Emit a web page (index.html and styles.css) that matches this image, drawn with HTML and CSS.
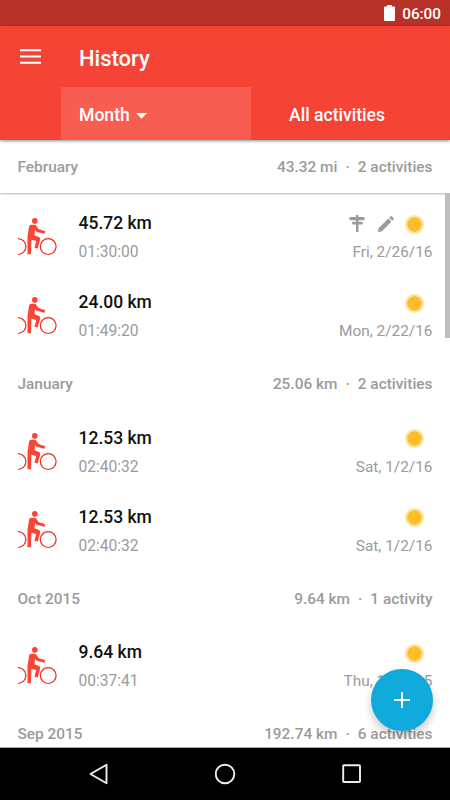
FILE: index.html
```
<!DOCTYPE html>
<html lang="en">
<head>
<meta charset="utf-8">
<title>History</title>
<link rel="stylesheet" href="styles.css">
</head>
<body>
<svg width="0" height="0" class="defs">
  <symbol id="rider" viewBox="0 0 40 40">
    <circle cx="30.2" cy="28.6" r="7.900" fill="none" stroke="#f22a1c" stroke-width="1.200"/>
    <path d="M0 20.700A7.900 7.900 0 0 1 0 36.500" fill="none" stroke="#f22a1c" stroke-width="1.200"/>
    <circle cx="16.8" cy="2.9" r="2.800" fill="#f94436"/>
    <path d="M13.200 6.800h3.300q1.300 0 2 1.200l2 3.100 6.800 2.200-.8 2.500-7.900-2.100-1.600-1.700-.5 5.300 4.500 1.600q1.600.7 1.200 2.400l-2.500 9.100-3.200-.7 1.700-6.600-4.800-1.400-.4 14.600H9.500V19l1.600-10.600q.4-1.600 2.100-1.600z" fill="#f94436"/>
  </symbol>
</svg>
<div class="screen">
  <div class="status">
    <svg class="battery" width="11" height="16" viewBox="0 0 11 16"><path d="M3 0h5v1.400h2q1 0 1 1v12.600q0 1-1 1H1q-1 0-1-1V2.400q0-1 1-1h2z" fill="#fff"/></svg>
    <span>06:00</span>
  </div>
  <header class="appbar">
    <div class="titlebar">
      <svg class="menu" width="21" height="15" viewBox="0 0 21 15"><path d="M0 1.300h21M0 7.500h21M0 13.700h21" stroke="#fff" stroke-width="2"/></svg>
      <h1>History</h1>
    </div>
    <div class="tabs">
      <div class="tab active">Month<svg class="caret" width="11" height="6" viewBox="0 0 11 6"><path d="M0 0h11L5.500 5.800z" fill="#fff"/></svg></div>
      <div class="tab">All activities</div>
    </div>
  </header>
  <main class="list">
    <div class="scrollbar"></div>
    <div class="group pinned"><span>February</span><span>43.32 mi<b>·</b>2 activities</span></div>
    <div class="row">
      <svg class="rider"><use href="#rider"/></svg>
      <div class="info"><strong>45.72 km</strong><span>01:30:00</span></div>
      <div class="meta">
        <div class="icons">
          <svg class="sign" width="17" height="18" viewBox="0 0 17 18"><path d="M7 0h2.500v2H15l1 1.600-1 1.600H9.500v1.500h3.400l1.300 1.300-1.300 1.400H9.500V17H7V9.400H3.200V6.700H7V5.200H1.300L0 3.600 1.300 2H7z" fill="#9b9b9b"/></svg>
          <svg class="pencil" width="16" height="16" viewBox="0 0 16 16"><path d="M0 16l.6-3.700L10.300 2.600l3.100 3.100L3.700 15.400zM11.200 1.700L12.400.5q.8-.8 1.600 0l1.500 1.500q.8.800 0 1.600l-1.200 1.200z" fill="#9b9b9b"/></svg>
          <i class="sun"></i>
        </div>
        <span>Fri, 2/26/16</span>
      </div>
    </div>
    <div class="row">
      <svg class="rider"><use href="#rider"/></svg>
      <div class="info"><strong>24.00 km</strong><span>01:49:20</span></div>
      <div class="meta"><div class="icons"><i class="sun"></i></div><span>Mon, 2/22/16</span></div>
    </div>
    <div class="group"><span>January</span><span>25.06 km<b>·</b>2 activities</span></div>
    <div class="row">
      <svg class="rider"><use href="#rider"/></svg>
      <div class="info"><strong>12.53 km</strong><span>02:40:32</span></div>
      <div class="meta"><div class="icons"><i class="sun"></i></div><span>Sat, 1/2/16</span></div>
    </div>
    <div class="row">
      <svg class="rider"><use href="#rider"/></svg>
      <div class="info"><strong>12.53 km</strong><span>02:40:32</span></div>
      <div class="meta"><div class="icons"><i class="sun"></i></div><span>Sat, 1/2/16</span></div>
    </div>
    <div class="group"><span>Oct 2015</span><span>9.64 km<b>·</b>1 activity</span></div>
    <div class="row">
      <svg class="rider"><use href="#rider"/></svg>
      <div class="info"><strong>9.64 km</strong><span>00:37:41</span></div>
      <div class="meta"><div class="icons"><i class="sun"></i></div><span>Thu, 10/1/15</span></div>
    </div>
    <div class="group"><span>Sep 2015</span><span>192.74 km<b>·</b>6 activities</span></div>
    <div class="fab"><svg width="16" height="16" viewBox="0 0 16 16"><path d="M8 0v16M0 8h16" stroke="#fff" stroke-width="2"/></svg></div>
  </main>
  <nav class="navbar">
    <svg width="20" height="22" viewBox="0 0 20 22"><path d="M17.500 1.800v18.400L1.500 11z" fill="none" stroke="#eee" stroke-width="1.900" stroke-linejoin="round"/></svg>
    <svg width="22" height="22" viewBox="0 0 22 22"><circle cx="10" cy="11" r="9.300" fill="none" stroke="#eee" stroke-width="1.900"/></svg>
    <svg width="20" height="22" viewBox="0 0 20 22"><rect x="1.200" y="2.200" width="16.800" height="16.800" rx=".7" fill="none" stroke="#eee" stroke-width="1.900"/></svg>
  </nav>
</div>
</body>
</html>
```
FILE: styles.css
```
* { box-sizing: border-box; }
body { margin: 0; font-family: Roboto, sans-serif; }
.defs { position: absolute; }
.screen { width: 450px; height: 800px; display: flex; flex-direction: column; overflow: hidden; background: #fff; }
svg { display: block; flex: none; }

.status { height: 26px; flex: none; background: #b73126; color: #fff; display: flex; align-items: center; justify-content: flex-end; gap: 7px; padding: 2px 9px 0 0; font-size: 15.3px; font-weight: 500; }
.battery { margin-top: -2px; }

.appbar { height: 114px; flex: none; background: #f54436; color: #fff; z-index: 2; box-shadow: 0 1px 3px rgba(0, 40, 40, .5); display: flex; flex-direction: column; }
.titlebar { height: 61px; display: flex; align-items: center; padding: 3px 0 0 20px; }
.menu { margin-top: -3px; }
h1 { margin: 0 0 0 38px; font-size: 22px; font-weight: 500; }
.tabs { height: 53px; display: flex; margin-left: 61px; }
.tab { width: 190px; display: flex; align-items: center; padding: 2px 0 0 18px; font-size: 17.6px; font-weight: 500; }
.tab + .tab { padding-left: 38px; }
.active { background: #f75d51; }
.caret { margin: 3px 0 0 6px; }

.list { flex: 1; min-height: 0; position: relative; overflow: hidden; border-bottom: 1px solid #aaa; }
.group { height: 56.6px; display: flex; align-items: center; justify-content: space-between; padding: 0 17.5px; font-size: 15.4px; font-weight: 500; color: #9b9b9b; }
.pinned { height: 53px; margin-bottom: 5.4px; padding-top: 1px; box-shadow: 0 1px 2px rgba(0, 0, 0, .3); }
.group b { margin: 0 8px; font-weight: 500; }
.row { height: 78.9px; display: flex; padding: 0 17.5px; font-size: 15.4px; color: #9b9b9b; }
.rider { width: 40px; height: 40px; margin: 19.8px 21px 0 0; }
.info { flex: 1; }
.info strong, .info span, .meta > span { display: block; line-height: 20px; }
.info strong { margin-top: 15px; font-size: 17.5px; font-weight: 500; color: #111; }
.info span { margin-top: 9px; font-size: 15.6px; }
.meta > span { text-align: right; margin-top: 9px; }
.icons { height: 20px; margin-top: 15px; display: flex; align-items: center; justify-content: flex-end; padding: 2px 9px 0 0; }
.sign { margin-right: 12px; }
.pencil { margin-right: 11px; }
.sun { width: 19px; height: 19px; border-radius: 50%; background: #fcbf2a; background-clip: padding-box; border: 2.5px solid #fee2a0; }
.scrollbar { position: absolute; right: 0; top: 53px; width: 5px; height: 145px; background: #bdbdbd; }
.fab { position: absolute; left: 371px; top: 528.5px; width: 62px; height: 62px; border-radius: 50%; background: #10a9dc; box-shadow: 0 5px 8px rgba(0, 0, 0, .22); display: flex; align-items: center; justify-content: center; }

.navbar { height: 52px; flex: none; background: #000; display: flex; align-items: center; justify-content: space-between; padding: 0 88px 0 89px; }
```
